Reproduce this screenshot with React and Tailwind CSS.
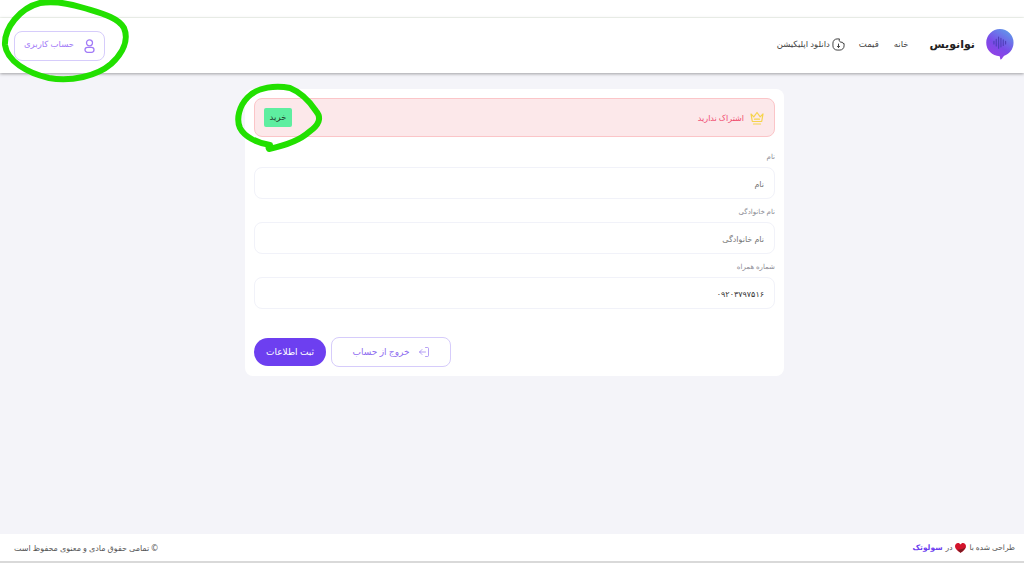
import React from "react";
import { LogOut } from "lucide-react";

function Logo() {
  return (
    <svg width="28" height="33" viewBox="0 0 30 35" className="shrink-0 -mt-[3px]">
      <defs>
        <linearGradient id="logoGrad" x1="0.8" y1="0" x2="0.2" y2="1">
          <stop offset="0" stopColor="#5f9bea" />
          <stop offset="0.55" stopColor="#7a4be8" />
          <stop offset="1" stopColor="#9a3fe6" />
        </linearGradient>
      </defs>
      <path
        d="M15 1a14.500 14.500 0 0 1 14.500 14.500c0 7-5 12.500-10 14-1 .3-2 3.500-3.500 4-1 .3-.8-3.500-1.500-3.500A14.500 14.500 0 0 1 15 1z"
        fill="url(#logoGrad)"
      />
      <g stroke="#4f3fb8" strokeWidth="1.200" strokeLinecap="round">
        <path d="M8.500 14v3M11 12v7M13.500 9.500v12M16 11v9M18.500 12.500v6M21 14v3" />
      </g>
    </svg>
  );
}

function DownloadIcon() {
  return (
    <svg width="13" height="13" viewBox="0 0 14 14" fill="none" stroke="#333" strokeWidth="1" className="shrink-0">
      <path d="M8 1H5.500A4.500 4.500 0 0 0 1 5.500v3A4.500 4.500 0 0 0 5.500 13h3A4.500 4.500 0 0 0 13 8.500V6a2 2 0 0 1-2-1.500A2.500 2.500 0 0 1 8 1z" />
      <path d="M7 6.500v3.500M5.800 9L7 10.200 8.200 9" strokeLinecap="round" />
    </svg>
  );
}

function UserIcon() {
  return (
    <svg width="11" height="14" viewBox="0 0 11 14" fill="none" stroke="#a27bf7" strokeWidth="1.300" className="shrink-0">
      <circle cx="5.500" cy="3.800" r="3" />
      <rect x="1" y="8.300" width="9" height="5" rx="2.500" />
    </svg>
  );
}

function CrownIcon() {
  return (
    <svg width="14" height="14" viewBox="0 0 14 14" fill="none" stroke="#f6d44c" strokeWidth="1.200" strokeLinejoin="round" strokeLinecap="round" className="shrink-0">
      <path d="M1 3l2.800 2.800L7 1.500l3.200 4.300L13 3l-1.300 7.500H2.300z" />
      <path d="M4.500 8.200h5M3.500 13h7" />
    </svg>
  );
}

function HeartIcon() {
  return (
    <svg width="11" height="10" viewBox="0 0 11 10" className="shrink-0">
      <path d="M5.500 9.800C2 7.500 0 5.500 0 3.200 0 1.300 1.400 0 3 0c1.100 0 2 .6 2.500 1.500C6 .6 6.900 0 8 0c1.600 0 3 1.300 3 3.200 0 2.300-2 4.300-5.500 6.600z" fill="#d3142c" />
      <path d="M5.500 9.800C8 8 10 6 10.500 4 8.500 6 6 6.500 2.500 6.800 3.500 7.800 4.400 8.900 5.500 9.800z" fill="#7d1a22" />
    </svg>
  );
}

function Field({ label, placeholder, value }) {
  return (
    <div>
      <label className="block text-[7px] leading-[11px] mb-[5px] text-[#8b8b94]">{label}</label>
      <input
        readOnly
        dir="rtl"
        placeholder={placeholder}
        value={value || ""}
        className="block w-full h-[32px] rounded-[8px] border border-[#f1f2f9] bg-white px-[10px] text-[8px] text-[#333] placeholder:text-[#777] outline-none"
      />
    </div>
  );
}

function Scribbles() {
  return (
    <svg className="absolute left-0 top-0 z-20 pointer-events-none" width="340" height="160" fill="none" stroke="#22e000" strokeWidth="6" strokeLinecap="round" strokeLinejoin="round">
      <path d="M40 3C20 8 4 28 5 45c2 16 22 28 44 33 22 4 48-2 62-14 12-11 18-24 13-36C118 17 100 13 84 8 68 3 52 1 40 3z" />
      <path d="M290 88c-14-3-32-1-42 9-9 9-12 22-8 31 4 8 16 15 30 17-2 2-2 2-1 4 14-3 30-8 40-17 10-7 13-14 7-21-6-9-16-19-26-23z" />
    </svg>
  );
}

export default function App() {
  return (
    <div dir="rtl" className="relative h-[563px] flex flex-col overflow-hidden bg-[#f4f4f9] font-['Noto_Sans','DejaVu_Sans',sans-serif] text-[#333]">
      <div className="h-[18px] bg-white border-b border-[#f6faf4]" />

      <header className="z-10 h-[55px] bg-white flex items-center justify-between pr-[10px] pl-[14px] shadow-[0_1px_3px_rgba(0,0,0,0.35)]">
        <div className="flex items-center">
          <Logo />
          <span className="mr-[11px] -mt-[2px] text-[11px] font-bold text-[#222]">نوانویس</span>
          <nav className="mr-[21px] -mt-[2px] flex items-center gap-[14px] text-[8.500px] text-[#444]">
            <a>خانه</a>
            <a className="mr-[1px]">قیمت</a>
            <a className="flex items-center gap-[2px]">
              <DownloadIcon />
              دانلود اپلیکیشن
            </a>
          </nav>
        </div>
        <button className="w-[91px] h-[30px] rounded-[8px] border border-[#d6ccfb] flex items-center justify-center gap-[10px] text-[8.500px] text-[#a27bf7]">
          <UserIcon />
          <span className="-mt-[2px]">حساب کاربری</span>
        </button>
      </header>

      <main className="flex-1 pt-[16px]">
        <div className="w-[539px] mr-[240px] rounded-[8px] bg-white p-[9px] h-[287px]">
          <div className="h-[39px] rounded-[8px] border border-[#fbc5c8] bg-[#fce8ea] flex items-center justify-between pr-[10px] pl-[9px]">
            <div className="flex items-center gap-[6px] text-[8px] text-[#f0476a]">
              <CrownIcon />
              اشتراک ندارید
            </div>
            <button className="w-[28px] h-[19px] rounded-[2px] bg-[#5eeea0] text-[8.500px] text-[#1f3b2c]">خرید</button>
          </div>

          <div className="mt-[14px] flex flex-col gap-[7px]">
            <Field label="نام" placeholder="نام" />
            <Field label="نام خانوادگی" placeholder="نام خانوادگی" />
            <Field label="شماره همراه" value="۰۹۲۰۳۷۹۷۵۱۶" />
          </div>

          <div dir="ltr" className="mt-[28px] flex items-center gap-[5px]">
            <button className="w-[72px] h-[28px] rounded-full bg-[#6d3ff0] text-white text-[9px]">ثبت اطلاعات</button>
            <button className="w-[120px] h-[30px] rounded-[8px] border border-[#d6ccfb] bg-white flex items-center justify-center gap-[8px] text-[9px] text-[#8f6ef0]">
              خروج از حساب
              <LogOut size={12} strokeWidth={1.300} className="rotate-180" />
            </button>
          </div>
        </div>
      </main>

      <footer className="h-[29px] bg-white border-b-2 border-[#d9d9d9] flex items-center justify-between pr-[9px] pl-[14px] text-[8px] text-[#555]">
        <div className="flex items-center gap-[3px] text-[7.500px]">
          طراحی شده با
          <HeartIcon />
          در
          <span className="font-bold text-[#6d3ff0]">سولوتک</span>
        </div>
        <div>© تمامی حقوق مادی و معنوی محفوظ است</div>
      </footer>

      <Scribbles />
    </div>
  );
}
